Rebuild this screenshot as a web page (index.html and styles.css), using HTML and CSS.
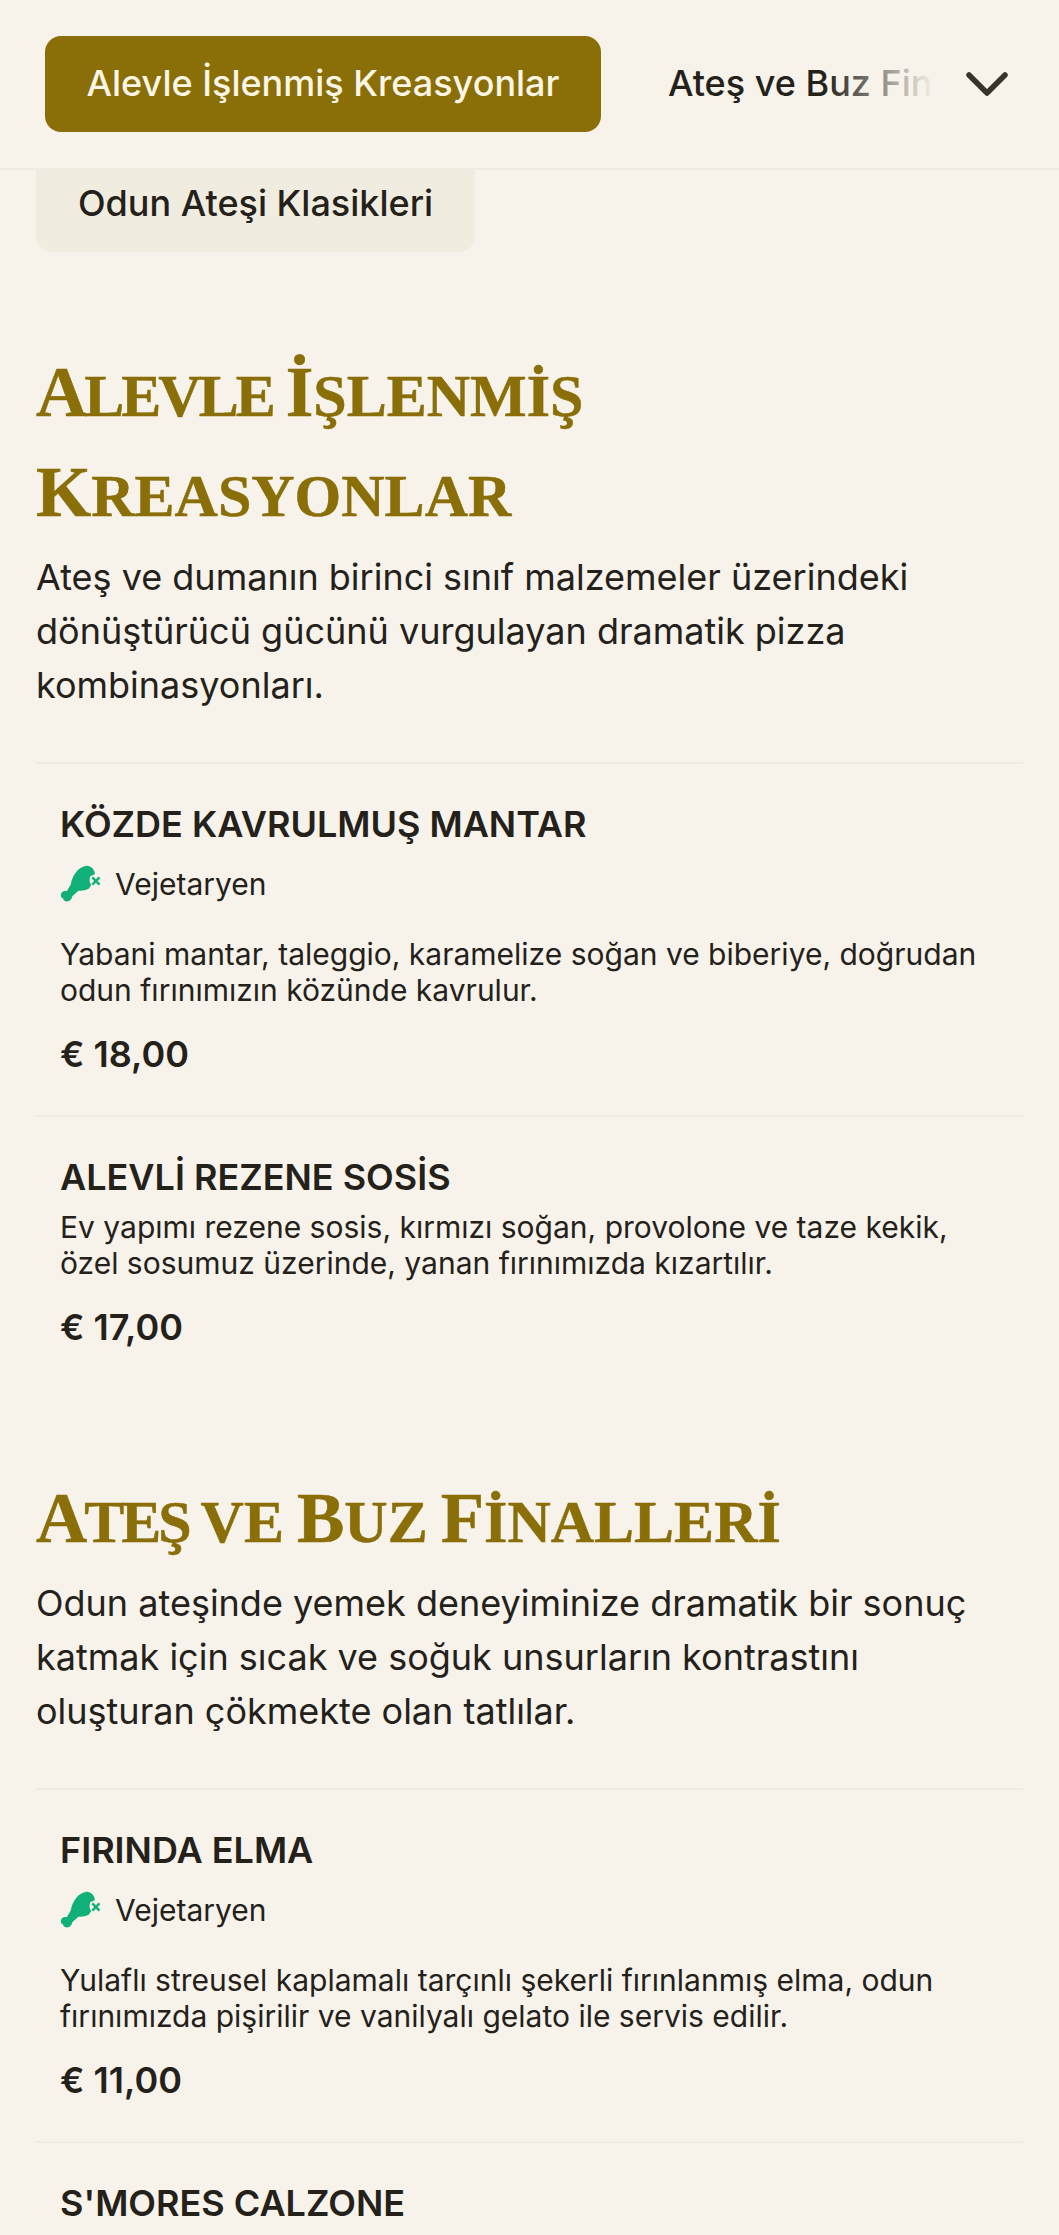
FILE: index.html
```html
<!DOCTYPE html>
<html lang="tr">
<head>
<meta charset="utf-8">
<title>Menü</title>
<link rel="stylesheet" href="styles.css">
</head>
<body>
<header class="topbar">
  <nav class="tabs">
    <a class="tab tab-active">Alevle İşlenmiş Kreasyonlar</a>
    <a class="tab">Ateş ve Buz Finalleri</a>
  </nav>
  <div class="fade"></div>
  <svg class="chevron" viewBox="0 0 42 24"><path d="M3 3 L21 21 L39 3" fill="none" stroke="#37342a" stroke-width="5.5" stroke-linecap="round" stroke-linejoin="round"/></svg>
</header>
<main class="page">
  <a class="chip">Odun Ateşi Klasikleri</a>

  <section class="section">
    <h2 class="section-title"><span class="snug"><span class="cap">A</span>levle</span> <span class="cap">İ</span>şlenmiş <span class="cap">K</span>reasyonlar</h2>
    <p class="section-text">Ateş ve dumanın birinci sınıf malzemeler üzerindeki dönüştürücü gücünü vurgulayan dramatik pizza kombinasyonları.</p>
    <article class="item">
      <h3 class="item-title">Közde Kavrulmuş Mantar</h3>
      <div class="badge">
        <svg class="badge-icon" viewBox="0 0 40 36"><path d="M26 .7C30 .5 34 4 34 9L29.5 11C28.5 14 28.5 17 30.5 19.5L28 23C24 25 20 25 18 25L12 30.5C11.5 33 10 35.5 6.5 35.5C4 35.5 3 34 3 32.5C1 32 0 29.5 1.5 27C3 25 5 25 6.5 25.5L10.5 19C12 10 18 1.5 26 .7Z" fill="#10b078"/><path d="M31.5 12L38.5 19M38.5 12L31.5 19" stroke="#10b078" stroke-width="2.4" fill="none"/></svg>
        <span>Vejetaryen</span>
      </div>
      <p class="item-text">Yabani mantar, taleggio, karamelize soğan ve biberiye, doğrudan odun fırınımızın közünde kavrulur.</p>
      <div class="price">€ 18,00</div>
    </article>
    <article class="item">
      <h3 class="item-title tight">Alevli Rezene Sosis</h3>
      <p class="item-text">Ev yapımı rezene sosis, kırmızı soğan, provolone ve taze kekik, özel sosumuz üzerinde, yanan fırınımızda kızartılır.</p>
      <div class="price">€ 17,00</div>
    </article>
  </section>

  <section class="section">
    <h2 class="section-title"><span class="snug"><span class="cap">A</span>teş</span> ve <span class="cap">B</span>uz <span class="cap">F</span>inalleri</h2>
    <p class="section-text">Odun ateşinde yemek deneyiminize dramatik bir sonuç katmak için sıcak ve soğuk unsurların kontrastını oluşturan çökmekte olan tatlılar.</p>
    <article class="item">
      <h3 class="item-title">Fırında Elma</h3>
      <div class="badge">
        <svg class="badge-icon" viewBox="0 0 40 36"><path d="M26 .7C30 .5 34 4 34 9L29.5 11C28.5 14 28.5 17 30.5 19.5L28 23C24 25 20 25 18 25L12 30.5C11.5 33 10 35.5 6.5 35.5C4 35.5 3 34 3 32.5C1 32 0 29.5 1.5 27C3 25 5 25 6.5 25.5L10.5 19C12 10 18 1.5 26 .7Z" fill="#10b078"/><path d="M31.5 12L38.5 19M38.5 12L31.5 19" stroke="#10b078" stroke-width="2.4" fill="none"/></svg>
        <span>Vejetaryen</span>
      </div>
      <p class="item-text">Yulaflı streusel kaplamalı tarçınlı şekerli fırınlanmış elma, odun fırınımızda pişirilir ve vanilyalı gelato ile servis edilir.</p>
      <div class="price">€ 11,00</div>
    </article>
    <article class="item">
      <h3 class="item-title">S'mores Calzone</h3>
    </article>
  </section>
</main>
</body>
</html>
```
FILE: styles.css
```css
* { box-sizing: border-box; }
html, body { margin: 0; padding: 0; }
body {
  width: 1059px;
  height: 2235px;
  overflow: hidden;
  background: #f7f3eb;
  color: #24211a;
  font-family: Inter, "Liberation Sans", sans-serif;
}
.topbar {
  position: relative;
  height: 170px;
  display: flex;
  align-items: flex-start;
  padding: 36px 0 0 45px;
  border-bottom: 2px solid #efebe2;
  background: #f7f3eb;
}
.tabs { display: flex; gap: 67px; width: 890px; overflow: hidden; white-space: nowrap; }
.tab { font-size: 36px; font-weight: 500; line-height: 94px; }
.tab-active {
  height: 96px;
  padding: 0 41.5px;
  background: #8a6e08;
  color: #fbf6e6;
  border-radius: 16px;
}
.fade {
  position: absolute;
  left: 825px;
  top: 40px;
  width: 110px;
  height: 90px;
  background: linear-gradient(to right, rgba(247,243,235,0), #f7f3eb);
}
.chevron { position: absolute; left: 966px; top: 72px; width: 42px; height: 24px; }
.page { padding: 0 36px; }
.chip {
  display: inline-block;
  height: 82px;
  padding: 0 42px;
  line-height: 66px;
  font-size: 36px;
  font-weight: 500;
  background: #f0ede0;
  border-radius: 0 0 16px 16px;
}
.section + .section { margin-top: 84px; }
.section-title {
  margin: 0 0 4px;
  font-family: "Liberation Serif", serif;
  font-weight: 700;
  font-size: 60px;
  line-height: 100px;
  word-spacing: -2px;
  -webkit-text-stroke: 0.5px #8a6e08;
  color: #8a6e08;
  text-transform: uppercase;
}
.section:first-of-type .section-title { margin-top: 94px; }
.cap { font-size: 71px; line-height: 0; }
.snug { letter-spacing: -3px; }
.section-text {
  margin: 0 0 50px;
  font-size: 36px;
  line-height: 54px;
}
.item { border-top: 2px solid #efebe2; padding: 38px 24px 39px; }
.item-title {
  margin: 0 0 16px;
  font-size: 36px;
  line-height: 44px;
  font-weight: 600;
  text-transform: uppercase;
}
.item-title.tight { margin-bottom: 10px; }
.badge { display: flex; align-items: center; gap: 14px; font-size: 30px; line-height: 44px; margin-bottom: 30px; }
.badge-icon { width: 41px; height: 37px; margin-top: -2px; }
.item-text { margin: 0 0 24px; font-size: 30px; line-height: 36px; }
.price { font-size: 36px; font-weight: 600; line-height: 44px; }
```
